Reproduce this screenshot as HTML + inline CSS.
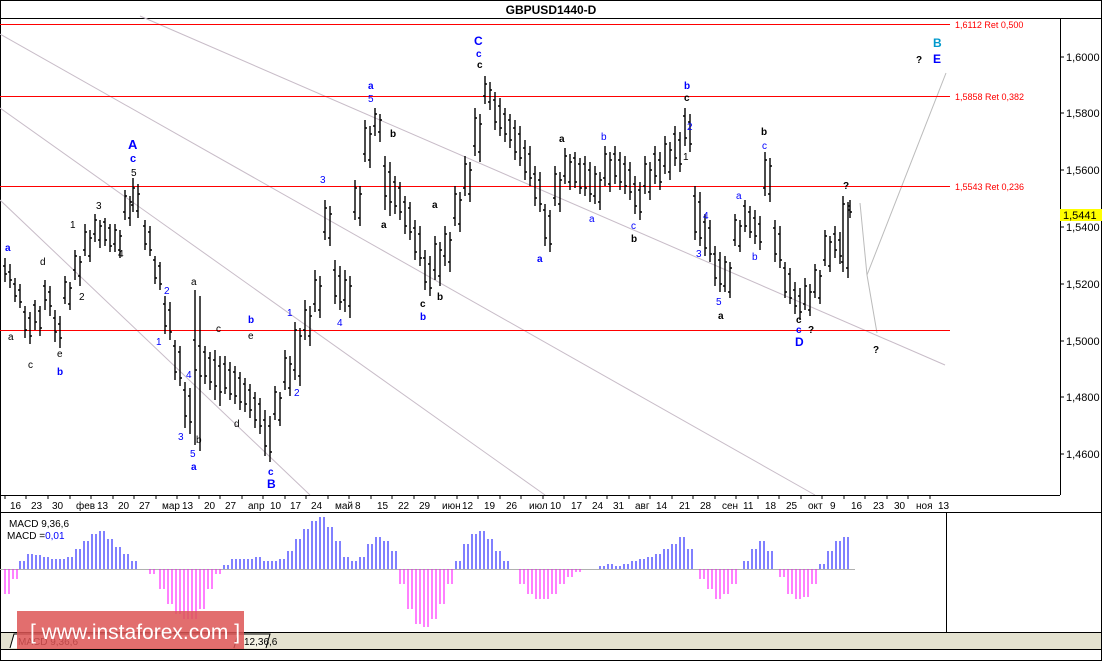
<!DOCTYPE html><html><head><meta charset="utf-8"><style>
body{margin:0;background:#fff;width:1103px;height:662px;overflow:hidden;font-family:"Liberation Sans",sans-serif}
svg{display:block}
text{font-family:"Liberation Sans","DejaVu Sans",sans-serif}
</style></head><body>
<svg width="1103" height="662" viewBox="0 0 1103 662" xmlns="http://www.w3.org/2000/svg">
<rect x="0" y="0" width="1103" height="662" fill="#fff"/>
<rect x="0.5" y="0.5" width="1101" height="660" fill="none" stroke="#000"/>
<line x1="0" y1="18.5" x2="1102" y2="18.5" stroke="#000"/>
<text x="551" y="14" font-size="12" font-weight="bold" text-anchor="middle">GBPUSD1440-D</text>
<line x1="1060.5" y1="18" x2="1060.5" y2="495" stroke="#000"/>
<g font-size="11" fill="#000">
<path d="M1060 57h4M1060 113h4M1060 170h4M1060 227h4M1060 284h4M1060 341h4M1060 397h4M1060 454h4" stroke="#000"/>
<text x="1066" y="61">1,6000</text><text x="1066" y="117">1,5800</text><text x="1066" y="174">1,5600</text>
<text x="1066" y="231">1,5400</text><text x="1066" y="288">1,5200</text><text x="1066" y="345">1,5000</text>
<text x="1066" y="401">1,4800</text><text x="1066" y="458">1,4600</text>
</g>
<rect x="1060" y="209" width="42" height="12" fill="#ffff00"/>
<text x="1063" y="219" font-size="11">1,5441</text>
<g stroke="#c8bcc8" stroke-width="1" fill="none">
<line x1="140" y1="16" x2="945" y2="365"/>
<line x1="0" y1="34" x2="815" y2="495"/>
<line x1="0" y1="108" x2="545" y2="495"/>
<line x1="0" y1="200" x2="310" y2="495"/>
<polyline points="860,203 867,275 877,333" stroke="#bbb"/>
<polyline points="867,275 946,73" stroke="#bbb"/>
</g>
<g stroke="#f00" stroke-width="1">
<line x1="0" y1="24.5" x2="950" y2="24.5"/>
<line x1="0" y1="96.5" x2="950" y2="96.5"/>
<line x1="0" y1="186.5" x2="950" y2="186.5"/>
<line x1="0" y1="330.5" x2="950" y2="330.5"/>
</g>
<g font-size="9" fill="#f00">
<text x="955" y="28">1,6112 Ret 0,500</text>
<text x="955" y="100">1,5858 Ret 0,382</text>
<text x="955" y="190">1,5543 Ret 0,236</text>
</g>
<defs>
<path id="bars" stroke="#000" stroke-width="1.4" fill="none" d="
M5 258V282M3 266H5M5 274H7
M15 278V302M13 284H15M15 296H17
M25 306V338M23 312H25M25 330H27
M35 300V330M33 305H35M35 322H37
M45 280V310M43 286H45M45 300H47
M55 310V342M53 318H55M55 332H57
M65 276V304M63 298H65M65 282H67
M75 250V280M73 270H75M75 256H77
M85 224V256M83 250H85M85 232H87
M95 214V242M93 234H95M95 220H97
M105 218V246M103 222H105M105 240H107
M115 224V252M113 244H115M115 230H117
M125 190V220M123 212H125M125 196H127
M133 178V212M131 205H133M133 188H135
M145 220V250M143 226H145M145 244H147
M155 256V284M153 260H155M155 278H157
M165 296V334M163 304H165M165 326H167
M175 340V380M173 346H175M175 372H177
M185 382V428M183 390H185M185 416H187
M195 290V445M193 340H195M195 370H197
M205 346V384M203 352H205M205 376H207
M215 350V400M213 360H215M215 386H217
M225 356V394M223 364H225M225 388H227
M235 366V404M233 372H235M235 396H237
M245 378V412M243 384H245M245 404H247
M255 392V428M253 398H255M255 420H257
M265 410V456M263 420H265M265 446H267
M275 386V420M273 414H275M275 392H277
M285 350V390M283 382H285M285 358H287
M295 322V380M293 370H295M295 330H297
M305 300V340M303 330H305M305 310H307
M315 270V312M313 304H315M315 280H317
M325 200V240M323 232H325M325 208H327
M335 260V304M333 270H335M335 296H337
M345 270V312M343 300H345M345 280H347
M355 180V220M353 212H355M355 188H357
M365 120V162M363 154H365M365 128H367
M375 108V136M373 126H375M375 114H377
M385 156V210M383 166H385M385 196H387
M395 176V214M393 182H395M395 206H397
M405 196V234M403 202H405M405 226H407
M415 220V260M413 228H415M415 252H417
M425 250V290M423 258H425M425 282H427
M435 236V280M433 270H435M435 244H437
M445 226V266M443 256H445M445 234H447
M455 186V226M453 218H455M455 194H457
M465 156V196M463 188H465M465 164H467
M475 108V156M473 146H475M475 118H477
M485 76V104M483 96H485M485 84H487
M495 92V130M493 100H495M495 122H497
M505 108V142M503 114H505M505 134H507
M515 120V160M513 128H515M515 152H517
M525 140V180M523 148H525M525 172H527
M535 166V206M533 174H535M535 198H537
M545 204V246M543 210H545M545 238H547
M555 166V206M553 198H555M555 174H557
M565 148V184M563 176H565M565 156H567
M575 152V188M573 158H575M575 182H577
M585 156V196M583 164H585M585 188H587
M595 166V204M593 196H595M595 174H597
M605 146V186M603 178H605M605 154H607
M615 146V184M613 154H615M615 176H617
M625 156V194M623 164H625M625 186H627
M635 176V214M633 184H635M635 206H637
M645 156V194M643 186H645M645 164H647
M655 146V184M653 154H655M655 176H657
M665 136V174M663 166H665M665 144H667
M675 126V166M673 134H675M675 158H677
M685 108V146M683 116H685M685 138H687
M695 186V240M693 196H695M695 232H697
M705 214V256M703 222H705M705 248H707
M715 246V286M713 254H715M715 278H717
M725 256V292M723 286H725M725 262H727
M735 214V246M733 240H735M735 220H737
M745 200V232M743 206H745M745 226H747
M755 210V244M753 218H755M755 236H757
M765 152V196M763 188H765M765 160H767
M775 220V262M773 228H775M775 254H777
M785 262V298M783 268H785M785 292H787
M795 282V314M793 290H795M795 306H797
M805 278V310M803 304H805M805 286H807
M815 264V298M813 292H815M815 270H817
M825 230V266M823 260H825M825 236H827
M835 226V258M833 234H835M835 250H837
M843 196V272M841 262H843M843 204H845
"/>
</defs>
<use href="#bars"/>
<use href="#bars" transform="translate(5,6)"/>
<path stroke="#000" stroke-width="1.4" d="M850 200V218M848 206H850M850 212H852"/>
<g font-size="10" font-weight="bold" fill="#000">
<text x="5" y="251" fill="#00f">a</text>
<text x="8" y="340" font-weight="normal">a</text>
<text x="28" y="368" font-weight="normal">c</text>
<text x="40" y="265" font-weight="normal">d</text>
<text x="57" y="357" font-weight="normal">e</text>
<text x="57" y="375" fill="#00f">b</text>
<text x="70" y="228" font-weight="normal">1</text>
<text x="79" y="300" font-weight="normal">2</text>
<text x="96" y="209" font-weight="normal">3</text>
<text x="118" y="257" font-weight="normal">4</text>
<text x="131" y="176" font-weight="normal">5</text>
<text x="130" y="162" fill="#00f" font-size="11">c</text>
<text x="128" y="149" fill="#00f" font-size="13">A</text>
<text x="156" y="345" fill="#00f" font-weight="normal">1</text>
<text x="164" y="294" fill="#00f" font-weight="normal">2</text>
<text x="178" y="440" fill="#00f" font-weight="normal">3</text>
<text x="186" y="378" fill="#00f" font-weight="normal">4</text>
<text x="190" y="457" fill="#00f" font-weight="normal">5</text>
<text x="191" y="470" fill="#00f">a</text>
<text x="191" y="285" font-weight="normal">a</text>
<text x="196" y="443" font-weight="normal">b</text>
<text x="216" y="332" font-weight="normal">c</text>
<text x="234" y="427" font-weight="normal">d</text>
<text x="248" y="339" font-weight="normal">e</text>
<text x="248" y="323" fill="#00f">b</text>
<text x="268" y="475" fill="#00f">c</text>
<text x="267" y="488" fill="#00f" font-size="12">B</text>
<text x="287" y="316" fill="#00f" font-weight="normal">1</text>
<text x="294" y="396" fill="#00f" font-weight="normal">2</text>
<text x="320" y="183" fill="#00f" font-weight="normal">3</text>
<text x="337" y="326" fill="#00f" font-weight="normal">4</text>
<text x="368" y="89" fill="#00f">a</text>
<text x="368" y="102" fill="#00f" font-weight="normal">5</text>
<text x="390" y="137">b</text>
<text x="381" y="228">a</text>
<text x="432" y="208">a</text>
<text x="420" y="307">c</text>
<text x="420" y="320" fill="#00f">b</text>
<text x="437" y="300">b</text>
<text x="474" y="45" fill="#00f" font-size="12">C</text>
<text x="476" y="57" fill="#00f">c</text>
<text x="477" y="68">c</text>
<text x="559" y="142">a</text>
<text x="537" y="262" fill="#00f">a</text>
<text x="589" y="222" fill="#00f" font-weight="normal">a</text>
<text x="601" y="140" fill="#00f" font-weight="normal">b</text>
<text x="631" y="229" fill="#00f" font-weight="normal">c</text>
<text x="631" y="242">b</text>
<text x="684" y="89" fill="#00f">b</text>
<text x="684" y="101">c</text>
<text x="687" y="130" fill="#00f" font-weight="normal">2</text>
<text x="683" y="160" font-weight="normal">1</text>
<text x="703" y="219" fill="#00f" font-weight="normal">4</text>
<text x="696" y="257" fill="#00f" font-weight="normal">3</text>
<text x="716" y="305" fill="#00f" font-weight="normal">5</text>
<text x="718" y="319">a</text>
<text x="736" y="199" fill="#00f" font-weight="normal">a</text>
<text x="752" y="260" fill="#00f" font-weight="normal">b</text>
<text x="761" y="135">b</text>
<text x="762" y="149" fill="#00f" font-weight="normal">c</text>
<text x="796" y="323">c</text>
<text x="796" y="333" fill="#00f">c</text>
<text x="795" y="346" fill="#00f" font-size="12">D</text>
<text x="808" y="333">?</text>
<text x="843" y="189">?</text>
<text x="873" y="353">?</text>
<text x="916" y="63">?</text>
<text x="933" y="47" fill="#09c" font-size="12">B</text>
<text x="933" y="63" fill="#00f" font-size="12">E</text>
</g>
<line x1="0" y1="495.5" x2="1060" y2="495.5" stroke="#000"/>
<line x1="0" y1="512.5" x2="1102" y2="512.5" stroke="#000"/>
<path stroke="#000" d="M5 495v4M26 495v4M48 495v4M70 495v4M91 495v4M113 495v4M134 495v4M156 495v4M177 495v4M199 495v4M220 495v4M242 495v4M263 495v4M285 495v4M306 495v4M328 495v4M349 495v4M371 495v4M392 495v4M414 495v4M435 495v4M457 495v4M478 495v4M500 495v4M521 495v4M543 495v4M564 495v4M586 495v4M607 495v4M629 495v4M650 495v4M672 495v4M693 495v4M715 495v4M736 495v4M758 495v4M779 495v4M801 495v4M822 495v4M844 495v4M865 495v4M887 495v4M908 495v4M930 495v4"/>
<g font-size="10" fill="#000">
<text x="10" y="509">16</text><text x="31" y="509">23</text><text x="52" y="509">30</text><text x="76" y="509">фев</text><text x="97" y="509">13</text>
<text x="118" y="509">20</text><text x="139" y="509">27</text><text x="162" y="509">мар</text><text x="182" y="509">13</text><text x="204" y="509">20</text>
<text x="225" y="509">27</text><text x="248" y="509">апр</text><text x="270" y="509">10</text><text x="290" y="509">17</text><text x="311" y="509">24</text>
<text x="335" y="509">май</text><text x="355" y="509">8</text><text x="377" y="509">15</text><text x="398" y="509">22</text><text x="419" y="509">29</text>
<text x="442" y="509">июн</text><text x="462" y="509">12</text><text x="484" y="509">19</text><text x="506" y="509">26</text><text x="529" y="509">июл</text>
<text x="550" y="509">10</text><text x="571" y="509">17</text><text x="592" y="509">24</text><text x="613" y="509">31</text><text x="635" y="509">авг</text>
<text x="656" y="509">14</text><text x="679" y="509">21</text><text x="700" y="509">28</text><text x="722" y="509">сен</text><text x="743" y="509">11</text>
<text x="765" y="509">18</text><text x="786" y="509">25</text><text x="808" y="509">окт</text><text x="830" y="509">9</text><text x="851" y="509">16</text>
<text x="873" y="509">23</text><text x="894" y="509">30</text><text x="916" y="509">ноя</text><text x="938" y="509">13</text>
</g>
<line x1="946.5" y1="512" x2="946.5" y2="632" stroke="#000"/>
<line x1="0" y1="569.5" x2="855" y2="569.5" stroke="#b0b0b0"/>
<text x="9" y="527" font-size="10">MACD 9,36,6</text>
<text x="7" y="539" font-size="10">MACD =<tspan fill="#00f">0,01</tspan></text>
<defs>
<g id="macd">
<path stroke="#ff00ff" stroke-width="1" d="M5 569v25M13 569v10M150 569v5M160 569v20M168 569v35M176 569v45M184 569v50M192 569v50M200 569v40M208 569v20M216 569v5M400 569v15M408 569v40M416 569v55M424 569v58M432 569v50M440 569v35M448 569v15M520 569v15M528 569v25M536 569v30M544 569v30M552 569v25M560 569v15M568 569v8M576 569v3M700 569v10M708 569v20M716 569v30M724 569v25M732 569v15M780 569v8M788 569v25M796 569v30M804 569v28M812 569v15"/>
<path stroke="#0000ff" stroke-width="1" d="M20 569v-8M28 569v-15M36 569v-14M44 569v-12M52 569v-10M60 569v-10M68 569v-12M76 569v-20M84 569v-28M92 569v-35M100 569v-38M108 569v-30M116 569v-22M124 569v-15M132 569v-8M224 569v-4M232 569v-10M240 569v-10M248 569v-10M256 569v-12M264 569v-8M272 569v-8M280 569v-10M288 569v-18M296 569v-30M304 569v-40M312 569v-48M320 569v-52M328 569v-42M336 569v-28M344 569v-12M352 569v-8M360 569v-12M368 569v-25M376 569v-32M384 569v-28M392 569v-18M456 569v-8M464 569v-25M472 569v-35M480 569v-38M488 569v-30M496 569v-18M504 569v-8M600 569v-3M608 569v-5M616 569v-3M624 569v-5M632 569v-8M640 569v-10M648 569v-12M656 569v-15M664 569v-20M672 569v-25M680 569v-32M688 569v-20M744 569v-8M752 569v-20M760 569v-28M768 569v-18M820 569v-5M828 569v-18M836 569v-28M844 569v-32"/>
</g>
</defs>
<use href="#macd"/>
<use href="#macd" transform="translate(4,0)"/>
<line x1="0" y1="632.5" x2="1102" y2="632.5" stroke="#000"/>
<rect x="1" y="633" width="1100" height="16" fill="#e4e2d0"/>
<path d="M10 648L14 634H238L234 648" fill="#fff" stroke="#000"/>
<path d="M234 648L238 634H270L266 648" fill="#f4f2e4" stroke="#000"/>
<text x="18" y="645" font-size="10">MACD 9,36,6</text>
<text x="244" y="645" font-size="10">12,36,6</text>
<line x1="0" y1="649.5" x2="1102" y2="649.5" stroke="#000"/>
<rect x="17" y="611" width="227" height="38" fill="#dd5555" opacity="0.85"/>
<text x="30" y="639" font-size="21" fill="#fff">[ www.instaforex.com ]</text>
</svg>
</body></html>
